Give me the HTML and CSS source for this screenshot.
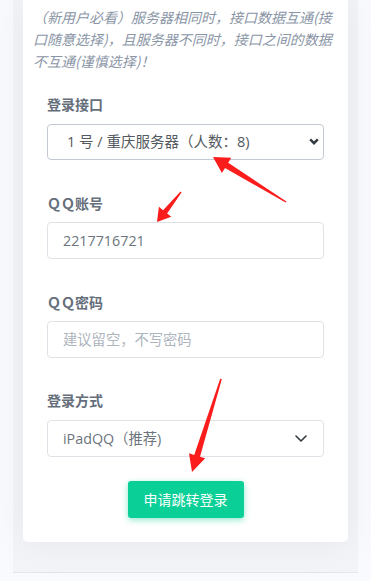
FILE: index.html
```html
<!DOCTYPE html>
<html lang="zh-CN">
<head>
<meta charset="utf-8">
<title>申请跳转登录</title>
<link rel="stylesheet" href="styles.css">
</head>
<body>
<div class="wrap">
  <div class="card">
    <p class="desc">（新用户必看）服务器相同时，接口数据互通(接口随意选择)，且服务器不同时，接口之间的数据不互通(谨慎选择)！</p>
    <form class="form">
      <div class="group">
        <label class="label">登录接口</label>
        <select class="field select-a">
          <option>1 号 / 重庆服务器（人数：8)</option>
        </select>
      </div>
      <div class="group">
        <label class="label">ＱＱ账号</label>
        <input class="field" type="text" value="2217716721">
      </div>
      <div class="group">
        <label class="label">ＱＱ密码</label>
        <input class="field" type="password" placeholder="建议留空，不写密码">
      </div>
      <div class="group last">
        <label class="label">登录方式</label>
        <select class="field select-b">
          <option>iPadQQ（推荐)</option>
        </select>
      </div>
      <div class="actions">
        <button type="button" class="btn">申请跳转登录</button>
      </div>
    </form>
  </div>
</div>
<svg class="marks" width="371" height="581" viewBox="0 0 371 581" xmlns="http://www.w3.org/2000/svg">
  <polygon fill="#fb1c1c" points="286.4,201.4 228.2,162.8 231.3,157.7 213,157 221.9,173.1 225,168 285.6,202.6"/>
  <polygon fill="#fb1c1c" points="180.5,191.6 163.1,210.2 158.9,206.8 157,222 171.3,216.8 167.1,213.4 181.5,192.4"/>
  <polygon fill="#fb1c1c" points="220.2,378.8 194.2,454.9 189,453.3 192,472 205.2,458.3 200,456.7 221.8,379.2"/>
</svg>
</body>
</html>
```

FILE: styles.css
```css
html, body {
  margin: 0;
  padding: 0;
}
body {
  position: relative;
  width: 371px;
  height: 581px;
  overflow: hidden;
  background: #f9fafd;
  font-family: "Open Sans", "Noto Sans CJK SC", sans-serif;
}
.wrap {
  margin: 0 13px;
  padding: 0 10px 30px;
  background: #f3f4f8;
  border-bottom: 1px solid #e4e6ec;
}
.card {
  background: #ffffff;
  border-radius: 0 0 5px 5px;
  box-shadow: 0 0 35px 0 rgba(154, 161, 171, 0.15);
  padding: 6px 10px 24px;
}
.desc {
  margin: 0 0 22px;
  font-family: "Noto Sans CJK SC", sans-serif;
  font-style: italic;
  font-size: 14px;
  line-height: 22px;
  color: #8a95a6;
}
.form {
  margin: 0;
  padding: 0 14px;
}
.group {
  display: flex;
  flex-direction: column;
  margin-bottom: 32.5px;
}
.group.last {
  margin-bottom: 24px;
}
.label {
  font-size: 14px;
  font-weight: 700;
  line-height: 20px;
  color: #656e7b;
  margin-bottom: 9.5px;
  font-family: "Noto Sans CJK SC", sans-serif;
}
.field {
  box-sizing: border-box;
  width: 100%;
  height: 36.8px;
  margin: 0;
  border: 1px solid #dfe2e7;
  border-radius: 4px;
  background: #ffffff;
  padding: 0 15px;
  font-family: "Open Sans", "Noto Sans CJK SC", sans-serif;
  font-size: 14.3px;
  color: #6c757d;
  outline: none;
}
.field::placeholder {
  color: #adb5bd;
}
select.field {
  -webkit-appearance: none;
  appearance: none;
  background-repeat: no-repeat;
}
.select-a {
  border-color: #c4cad3;
  padding-left: 19px;
  font-size: 14.5px;
  color: #555a60;
  background-image: url("data:image/svg+xml;utf8,<svg xmlns='http://www.w3.org/2000/svg' width='10' height='7' viewBox='0 0 10 7'><path d='M1.2 1.3 5 5.2 8.8 1.3' fill='none' stroke='%23333a40' stroke-width='2.4'/></svg>");
  background-position: right 4.5px center;
  background-size: 10px 7px;
}
.select-b {
  background-image: url("data:image/svg+xml;utf8,<svg xmlns='http://www.w3.org/2000/svg' width='12' height='7' viewBox='0 0 12 7'><path d='M1 1 6 6 11 1' fill='none' stroke='%23343a40' stroke-width='1.6' stroke-linecap='round' stroke-linejoin='round'/></svg>");
  background-position: right 16px center;
  background-size: 12px 7px;
}
.actions {
  display: flex;
  justify-content: center;
}
.btn {
  height: 37px;
  padding: 0 16px;
  border: 0;
  border-radius: 3px;
  background: #0acf97;
  color: #ffffff;
  font-family: "Noto Sans CJK SC", sans-serif;
  font-size: 14px;
  box-shadow: 0 2px 6px 0 rgba(10, 207, 151, 0.45);
}
.marks {
  position: absolute;
  top: 0;
  left: 0;
  pointer-events: none;
}
```
